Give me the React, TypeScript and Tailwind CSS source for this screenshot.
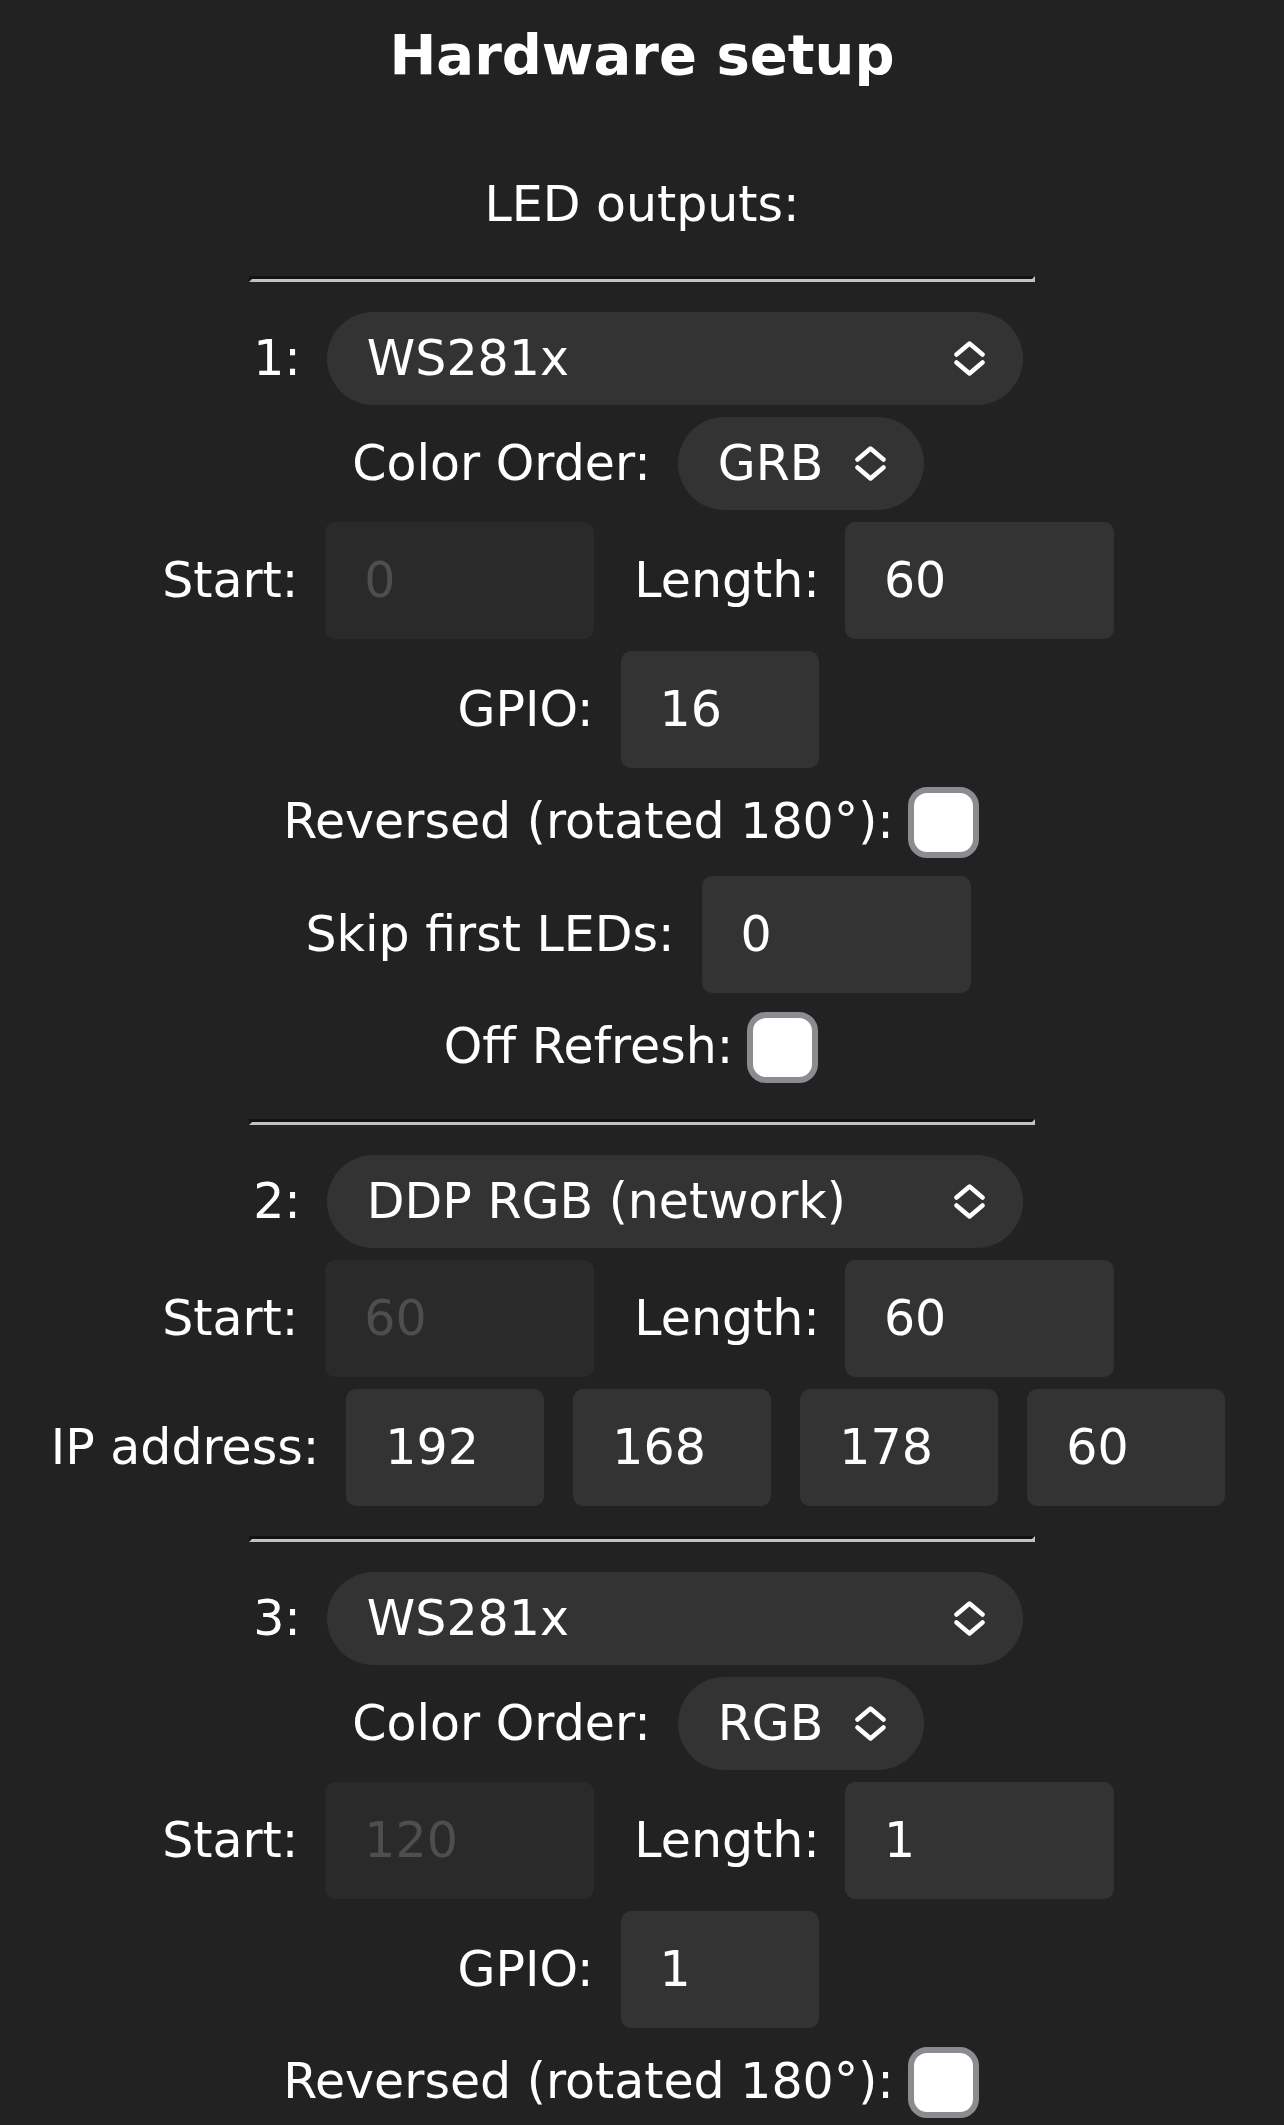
import React from "react";

function Chevrons() {
  return (
    <svg width="31" height="35" viewBox="0 0 31 35" fill="none" stroke="white" strokeWidth="4.5" strokeLinecap="round" strokeLinejoin="round">
      <path d="M2.5 13.5 L15.5 2.5 L28.5 13.5" />
      <path d="M2.5 21.5 L15.5 32.5 L28.5 21.5" />
    </svg>
  );
}

function Select({ text, wide }: { text: string; wide?: boolean }) {
  return (
    <div
      className={
        (wide ? "w-[696px] " : "w-[246px] ") +
        "h-[93px] rounded-full bg-[#333333] flex items-center justify-between pl-[40px] pr-[38px] text-white"
      }
    >
      <span>{text}</span>
      <Chevrons />
    </div>
  );
}

function NumInput({ value, w, disabled }: { value: string; w: "l" | "s"; disabled?: boolean }) {
  return (
    <div
      className={
        (w === "l" ? "w-[269px] " : "w-[198px] ") +
        "h-[117px] rounded-[10px] flex items-center pl-[39px] " +
        (disabled ? "bg-[#2a2a2a] text-[#4e4e4e]" : "bg-[#333333] text-white")
      }
    >
      {value}
    </div>
  );
}

function Checkbox() {
  return <div className="w-[71px] h-[71px] rounded-[19px] border-[6px] border-[#8c8c90] bg-white mr-[14px]" />;
}

function Hr() {
  return <div className="w-[786px] h-[6px] border-t-[3px] border-b-[3px] border-l-[3px] border-r-[3px] border-t-[#121212] border-l-[#121212] border-b-[#c2c2c2] border-r-[#c2c2c2]" />;
}

function Row({ h, children }: { h: "s" | "i" | "c"; children: React.ReactNode }) {
  return (
    <div
      className={
        (h === "s" ? "h-[93px] " : h === "i" ? "h-[117px] " : "h-[84px] ") +
        "flex items-center justify-center pr-[8px]"
      }
    >
      {children}
    </div>
  );
}

function Label({ children }: { children: React.ReactNode }) {
  return <span className="whitespace-pre">{children}</span>;
}

function Section({ children }: { children: React.ReactNode }) {
  return <div className="flex flex-col items-center gap-[12px] py-[30px]">{children}</div>;
}

function StartLength({ start, length }: { start: string; length: string }) {
  return (
    <div className="flex items-center">
      <Label>Start:</Label>
      <div className="ml-[27px]">
        <NumInput value={start} w="l" disabled />
      </div>
      <div className="ml-[40px]">
        <Label>Length:</Label>
      </div>
      <div className="ml-[25px]">
        <NumInput value={length} w="l" />
      </div>
    </div>
  );
}

export default function App() {
  return (
    <div className="w-[1284px] h-[2125px] overflow-hidden bg-[#222222] text-white font-['DejaVu_Sans',Verdana,sans-serif] text-[49px] leading-[48px] flex flex-col items-center">
      <div className="mt-[27px] text-[56px] leading-[56px] font-bold">Hardware setup</div>
      <div className="mt-[98px]">LED outputs:</div>
      <div className="mt-[47px]">
        <Hr />
      </div>
      <Section>
        <Row h="s">
          <div className="flex items-center gap-[26px]">
            <Label>1:</Label>
            <Select text="WS281x" wide />
          </div>
        </Row>
        <Row h="s">
          <div className="flex items-center gap-[27px]">
            <Label>Color Order:</Label>
            <Select text="GRB" />
          </div>
        </Row>
        <Row h="i">
          <StartLength start="0" length="60" />
        </Row>
        <Row h="i">
          <div className="flex items-center gap-[27px]">
            <Label>GPIO:</Label>
            <NumInput value="16" w="s" />
          </div>
        </Row>
        <Row h="c">
          <div className="flex items-center gap-[14px]">
            <Label>Reversed (rotated 180°):</Label>
            <Checkbox />
          </div>
        </Row>
        <Row h="i">
          <div className="flex items-center gap-[27px]">
            <Label>Skip first LEDs:</Label>
            <NumInput value="0" w="l" />
          </div>
        </Row>
        <Row h="c">
          <div className="flex items-center gap-[14px]">
            <Label>Off Refresh:</Label>
            <Checkbox />
          </div>
        </Row>
      </Section>
      <Hr />
      <Section>
        <Row h="s">
          <div className="flex items-center gap-[26px]">
            <Label>2:</Label>
            <Select text="DDP RGB (network)" wide />
          </div>
        </Row>
        <Row h="i">
          <StartLength start="60" length="60" />
        </Row>
        <Row h="i">
          <div className="flex items-center gap-[27px]">
            <Label>IP address:</Label>
            <div className="flex items-center gap-[29px]">
              <NumInput value="192" w="s" />
              <NumInput value="168" w="s" />
              <NumInput value="178" w="s" />
              <NumInput value="60" w="s" />
            </div>
          </div>
        </Row>
      </Section>
      <Hr />
      <Section>
        <Row h="s">
          <div className="flex items-center gap-[26px]">
            <Label>3:</Label>
            <Select text="WS281x" wide />
          </div>
        </Row>
        <Row h="s">
          <div className="flex items-center gap-[27px]">
            <Label>Color Order:</Label>
            <Select text="RGB" />
          </div>
        </Row>
        <Row h="i">
          <StartLength start="120" length="1" />
        </Row>
        <Row h="i">
          <div className="flex items-center gap-[27px]">
            <Label>GPIO:</Label>
            <NumInput value="1" w="s" />
          </div>
        </Row>
        <Row h="c">
          <div className="flex items-center gap-[14px]">
            <Label>Reversed (rotated 180°):</Label>
            <Checkbox />
          </div>
        </Row>
      </Section>
    </div>
  );
}
